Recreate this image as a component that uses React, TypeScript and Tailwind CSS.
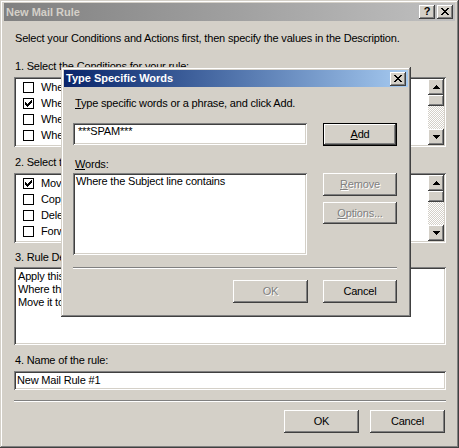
import React from 'react'

const raised =
  'shadow-[inset_-1px_-1px_0_#404040,inset_1px_1px_0_#ffffff,inset_-2px_-2px_0_#808080,inset_2px_2px_0_#d4d0c8]'
const sunken =
  'shadow-[inset_1px_1px_0_#808080,inset_-1px_-1px_0_#ffffff,inset_2px_2px_0_#404040,inset_-2px_-2px_0_#d4d0c8]'
const frame =
  'shadow-[inset_-1px_-1px_0_#404040,inset_1px_1px_0_#d4d0c8,inset_-2px_-2px_0_#808080,inset_2px_2px_0_#ffffff]'

function Pixels({ rows, color = '#000' }: { rows: string[]; color?: string }) {
  const w = rows[0].length
  const h = rows.length
  return (
    <svg width={w} height={h} viewBox={`0 0 ${w} ${h}`} shapeRendering="crispEdges">
      {rows.flatMap((r, y) =>
        r.split('').map((c, x) =>
          c === 'X' ? <rect key={`${x}-${y}`} x={x} y={y} width={1} height={1} fill={color} /> : null
        )
      )}
    </svg>
  )
}

const closeGlyph = ['XX....XX', '.XX..XX.', '..XXXX..', '...XX...', '..XXXX..', '.XX..XX.', 'XX....XX']
const upGlyph = ['...X...', '..XXX..', '.XXXXX.', 'XXXXXXX']
const downGlyph = ['XXXXXXX', '.XXXXX.', '..XXX..', '...X...']
const checkGlyph = ['......X', '.....XX', 'X...XXX', 'XX.XXX.', 'XXXXX..', '.XXX...', '..X....']

function CaptionButtons({ help }: { help?: boolean }) {
  return (
    <div className="flex gap-[2px]">
      {help && (
        <div className={`w-4 h-[14px] bg-[#d4d0c8] ${raised} flex items-center justify-center font-bold text-[11px] leading-none text-black pb-px`}>
          ?
        </div>
      )}
      <div className={`w-4 h-[14px] bg-[#d4d0c8] ${raised} flex items-center justify-center pb-px`}>
        <Pixels rows={closeGlyph} />
      </div>
    </div>
  )
}

function Btn({
  children,
  disabled,
  def,
  className = '',
}: {
  children: React.ReactNode
  disabled?: boolean
  def?: boolean
  className?: string
}) {
  return (
    <div
      className={`bg-[#d4d0c8] ${raised} flex items-center justify-center leading-[13px] ${
        def ? 'border border-black' : ''
      } ${disabled ? 'text-[#808080] [text-shadow:1px_1px_0_#ffffff]' : 'text-black'} ${className}`}
    >
      {children}
    </div>
  )
}

function ScrollBar({ thumb }: { thumb: number }) {
  return (
    <div className="w-4 flex flex-col">
      <div className={`h-4 bg-[#d4d0c8] ${raised} flex items-center justify-center`}>
        <Pixels rows={upGlyph} />
      </div>
      <div className={`bg-[#d4d0c8] ${raised}`} style={{ height: thumb }} />
      <div className="flex-1 bg-[image:repeating-conic-gradient(#d4d0c8_0_25%,#ffffff_0_50%)] bg-[length:2px_2px]" />
      <div className={`h-4 bg-[#d4d0c8] ${raised} flex items-center justify-center`}>
        <Pixels rows={downGlyph} />
      </div>
    </div>
  )
}

function CheckList({ items }: { items: { label: string; on?: boolean }[] }) {
  return (
    <div className={`h-[70px] bg-white ${sunken} p-[2px] flex`}>
      <div className="flex-1 flex flex-col">
        {items.map((it) => (
          <div key={it.label} className="h-4 flex items-center pl-[7px] gap-[7px] whitespace-nowrap">
            <div className="w-[11px] h-[11px] border border-black bg-white flex items-center justify-center">
              {it.on && <Pixels rows={checkGlyph} />}
            </div>
            <span>{it.label}</span>
          </div>
        ))}
      </div>
      <ScrollBar thumb={11} />
    </div>
  )
}

function U({ children }: { children: React.ReactNode }) {
  return <span className="underline underline-offset-[1px]">{children}</span>
}

export default function App() {
  return (
    <div className="w-[459px] h-[448px] overflow-hidden bg-white">
      <div
        className={`relative w-[459px] h-[448px] bg-[#d4d0c8] ${frame} pt-[3px] px-[4px] font-['Liberation_Sans',Arial,sans-serif] text-[11px] leading-[13px] tracking-[-0.18px] text-black`}
      >
        {/* caption */}
        <div className="h-[18px] flex items-center justify-between pl-[2px] pr-[2px] bg-gradient-to-r from-[#808080] to-[#c0c0c0]">
          <span className="font-bold tracking-normal text-[#d4d0c8]">New Mail Rule</span>
          <CaptionButtons help />
        </div>

        <div className="flex flex-col pl-[10px] pr-[9px]">
          <p className="mt-[11px] pl-px whitespace-nowrap">
            Select your Conditions and Actions first, then specify the values in the Description.
          </p>

          <p className="mt-[15px] pl-px whitespace-nowrap">1. Select the Conditions for your rule:</p>
          <div className="mt-[4px]">
            <CheckList
              items={[
                { label: 'Where the From line contains people' },
                { label: 'Where the Subject line contains specific words', on: true },
                { label: 'Where the message body contains specific words' },
                { label: 'Where the To line contains people' },
              ]}
            />
          </div>

          <p className="mt-[9px] pl-px whitespace-nowrap">2. Select the Actions for your rule:</p>
          <div className="mt-[4px]">
            <CheckList
              items={[
                { label: 'Move it to the specified folder', on: true },
                { label: 'Copy it to the specified folder' },
                { label: 'Delete it' },
                { label: 'Forward it to people' },
              ]}
            />
          </div>

          <p className="mt-[8px] pl-px whitespace-nowrap">
            3. Rule Description (click on an underlined value to edit it):
          </p>
          <div className={`mt-[3px] h-[78px] bg-white ${sunken} pt-[3px] pl-[4px] whitespace-nowrap`}>
            <p>Apply this rule after the message arrives</p>
            <p>
              Where the Subject line <span className="text-[#0000ff] underline">contains specific words</span>
            </p>
            <p>
              Move it to the <span className="text-[#0000ff] underline">specified</span> folder
            </p>
          </div>

          <p className="mt-[9px] pl-px whitespace-nowrap">4. Name of the rule:</p>
          <div className={`mt-[4px] h-[19px] bg-white ${sunken} pt-[3px] pl-[3px]`}>New Mail Rule #1</div>

          <div className="mt-[10px] h-[2px] border-t border-[#808080] border-b border-b-white" />

          <div className="mt-[8px] flex justify-end gap-[11px] pr-px">
            <Btn className="w-[75px] h-[23px]">OK</Btn>
            <Btn className="w-[75px] h-[23px]">Cancel</Btn>
          </div>
        </div>

        {/* Type Specific Words dialog */}
        <div className={`absolute left-[61px] top-[67px] w-[350px] h-[250px] bg-[#d4d0c8] ${frame} pt-[3px] px-[3px]`}>
          <div className="h-[17px] flex items-center justify-between pl-[2px] pr-[2px] bg-gradient-to-r from-[#0a246a] to-[#a6caf0]">
            <span className="font-bold tracking-normal text-white">Type Specific Words</span>
            <CaptionButtons />
          </div>

          <div className="flex flex-col px-[9px]">
            <p className="mt-[10px] pl-[2px] whitespace-nowrap">
              <U>T</U>ype specific words or a phrase, and click Add.
            </p>

            <div className="mt-[13px] flex items-start gap-[16px]">
              <div className={`w-[234px] h-[22px] bg-white ${sunken} pt-[2px] pl-[5px]`}>***SPAM***</div>
              <Btn def className="w-[74px] h-[23px]">
                <U>A</U>dd
              </Btn>
            </div>

            <p className="mt-[12px] pl-[2px]">
              <U>W</U>ords:
            </p>

            <div className="mt-[2px] flex items-start gap-[16px]">
              <div className={`w-[234px] h-[82px] bg-white ${sunken} pt-[2px] pl-[3px] whitespace-nowrap`}>
                Where the Subject line contains
              </div>
              <div className="flex flex-col gap-[6px]">
                <Btn disabled className="w-[74px] h-[23px]">
                  <U>R</U>emove
                </Btn>
                <Btn disabled className="w-[74px] h-[22px]">
                  <U>O</U>ptions...
                </Btn>
              </div>
            </div>

            <div className="mt-[12px] h-[2px] w-[324px] border-t border-[#808080] border-b border-b-white" />

            <div className="mt-[11px] flex justify-end gap-[15px] w-[324px]">
              <Btn disabled className="w-[75px] h-[23px]">
                OK
              </Btn>
              <Btn className="w-[74px] h-[23px]">Cancel</Btn>
            </div>
          </div>
        </div>
      </div>
    </div>
  )
}
